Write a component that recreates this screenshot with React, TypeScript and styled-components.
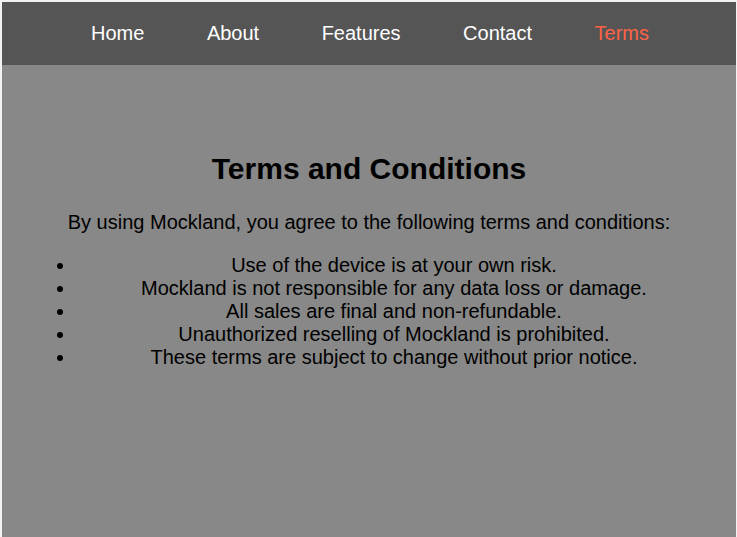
import React from "react";
import styled, { createGlobalStyle } from "styled-components";

const GlobalStyle = createGlobalStyle`
  html, body {
    margin: 0;
    padding: 0;
  }
  body {
    background: #f2f2f2;
    padding: 2px 1px 0 2px;
    font-family: "Liberation Sans", Arial, sans-serif;
    overflow: hidden;
  }
`;

const Page = styled.div`
  display: flex;
  flex-direction: column;
  min-height: calc(100vh - 2px);
  background: #888888;
`;

const Nav = styled.nav`
  background: #555555;
  padding: 20px 0 20px 2px;
  display: flex;
  justify-content: center;
  gap: 62.5px;
`;

const NavLink = styled.a<{ $active?: boolean }>`
  color: ${(p) => (p.$active ? "#ff6347" : "#ffffff")};
  text-decoration: none;
  font-size: 20px;
  line-height: 23px;
  cursor: pointer;
`;

const Main = styled.main`
  flex: 1;
  padding: 67px 20px 20px;
  text-align: center;
  color: #000000;
`;

const Title = styled.h1`
  font-size: 30px;
  font-weight: bold;
  margin: 20px 0;
`;

const Intro = styled.p`
  font-size: 20px;
  line-height: 23px;
  margin: 25px 0 20px;
`;

const List = styled.ul`
  margin: 20px 0;
  padding: 0 4px 0 54px;
  font-size: 20px;
  line-height: 23px;
`;

const items = [
  "Use of the device is at your own risk.",
  "Mockland is not responsible for any data loss or damage.",
  "All sales are final and non-refundable.",
  "Unauthorized reselling of Mockland is prohibited.",
  "These terms are subject to change without prior notice.",
];

const links = ["Home", "About", "Features", "Contact", "Terms"];

export default function App() {
  return (
    <>
      <GlobalStyle />
      <Page>
        <Nav>
          {links.map((l) => (
            <NavLink key={l} $active={l === "Terms"}>
              {l}
            </NavLink>
          ))}
        </Nav>
        <Main>
          <Title>Terms and Conditions</Title>
          <Intro>
            By using Mockland, you agree to the following terms and conditions:
          </Intro>
          <List>
            {items.map((i) => (
              <li key={i}>{i}</li>
            ))}
          </List>
        </Main>
      </Page>
    </>
  );
}
